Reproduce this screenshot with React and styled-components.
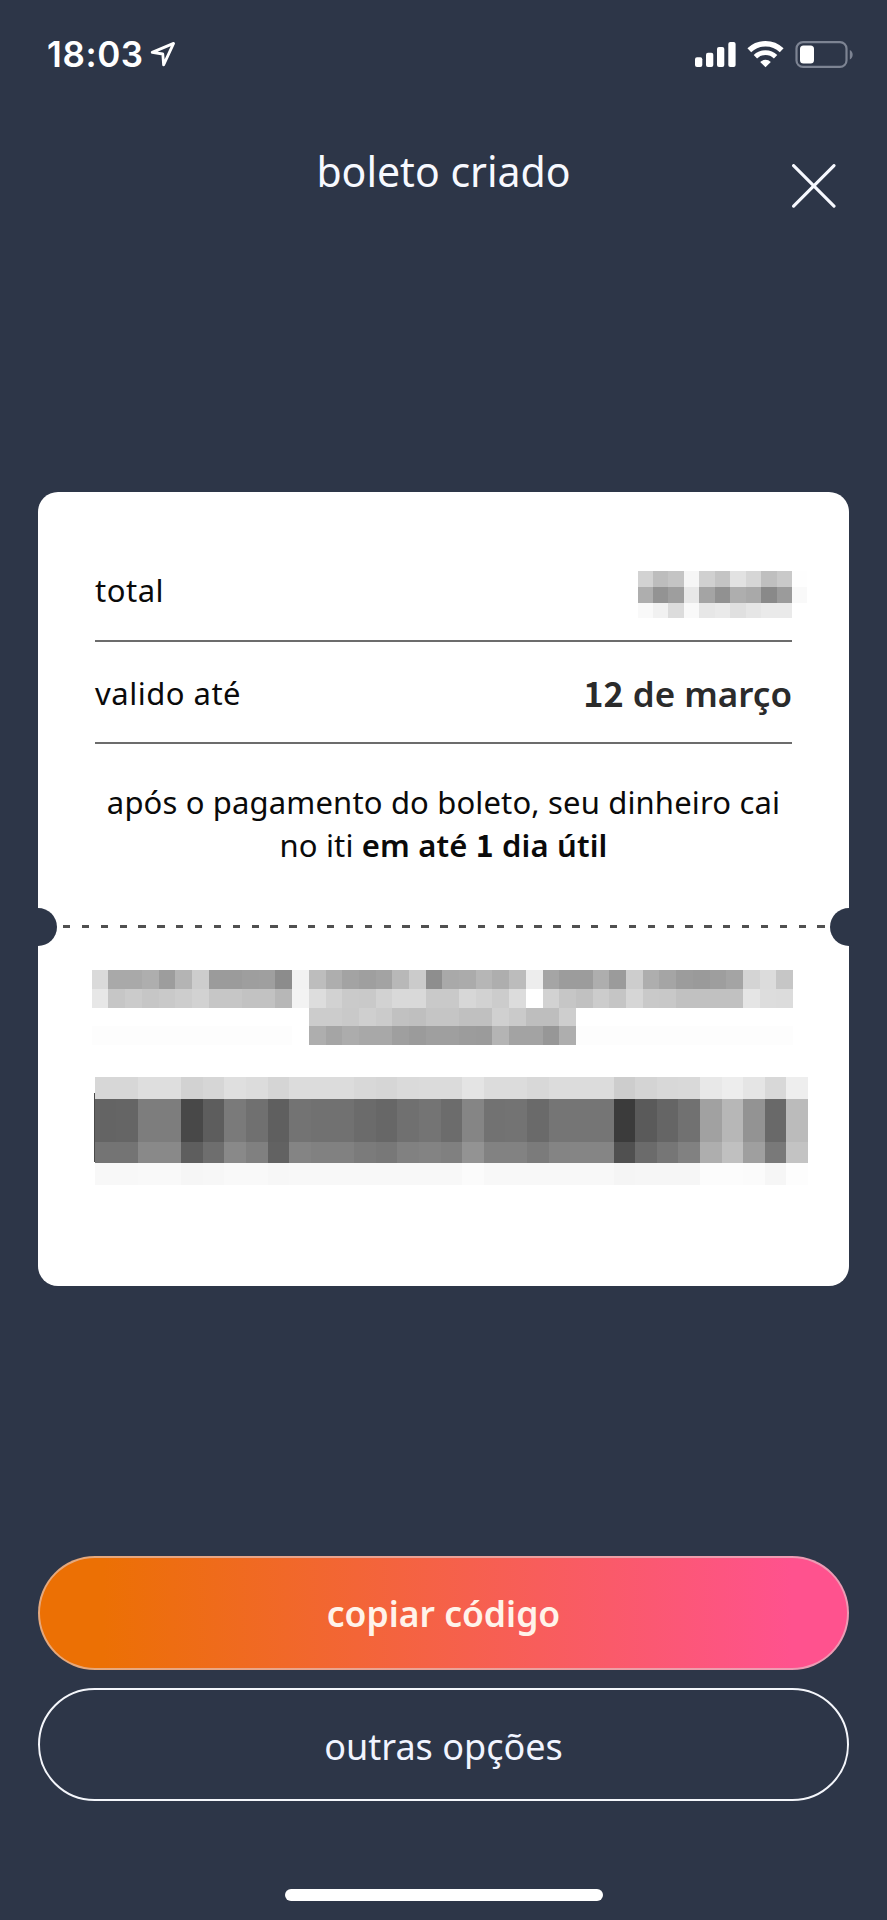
import React from "react";
import styled, { createGlobalStyle } from "styled-components";

const ink = "#2d3648";
const sans = '"Noto Sans", "Open Sans", sans-serif';

const GlobalStyle = createGlobalStyle`
  *, *::before, *::after { box-sizing: border-box; }
  body { margin: 0; background: ${ink}; }
  button { font: inherit; background: none; border: 0; padding: 0; cursor: pointer; }
`;

const Screen = styled.main`
  width: 887px;
  height: 1920px;
  display: flex;
  flex-direction: column;
  background: ${ink};
  font-family: ${sans};
  overflow: hidden;
`;

const StatusBar = styled.div`
  height: 110px;
  padding: 32px 34px 0 47px;
  display: flex;
  justify-content: space-between;
  align-items: flex-start;
  color: #fff;
`;

const Clock = styled.div`
  display: flex;
  align-items: flex-start;
  gap: 6px;
  font: 600 35px/44px Inter, sans-serif;
  letter-spacing: 0.6px;

  svg { margin-top: 9px; }
`;

const Indicators = styled.div`
  display: flex;
  gap: 11px;
  padding-top: 9px;
`;

const Header = styled.header`
  height: 382px;
  padding: 35px 51px 0;
  display: grid;
  grid-template-columns: 44px 1fr 44px;
  align-items: start;
`;

const Title = styled.h1`
  grid-column: 2;
  margin: 2px 0 0;
  color: #f7f9ff;
  font-size: 41px;
  line-height: 48px;
  font-weight: 400;
  text-align: center;
`;

const CloseButton = styled.button`
  height: 44px;
  margin-top: 19px;
`;

const Card = styled.section`
  height: 794px;
  margin: 0 38px;
  padding: 47px 57px 0;
  border-radius: 20px;
  background: #fff;
`;

const Row = styled.div`
  height: 102.6px;
  padding-top: 30px;
  display: flex;
  justify-content: space-between;
  align-items: flex-start;
  border-bottom: 2.5px solid #6c6c6c;
`;

const Label = styled.span`
  margin-top: 1px;
  color: #0a0a0a;
  font-size: 31px;
  line-height: 40px;
  letter-spacing: 0.5px;
`;

const Value = styled.span`
  margin-top: 2px;
  color: #2b2b2b;
  font-size: 35px;
  line-height: 40px;
  font-weight: 600;
`;

const Numeral = styled.span`
  font-family: "Noto Sans CJK JP", sans-serif;
  font-size: 0.98em;
  font-weight: 700;
  line-height: 1;
`;

const Note = styled.p`
  margin: 37px 0 0;
  color: #0a0a0a;
  font-size: 31px;
  line-height: 42.7px;
  text-align: center;
  letter-spacing: 0.15px;
  white-space: nowrap;

  b { font-weight: 600; }
`;

const Tear = styled.div`
  height: 38px;
  margin: 41px -57px 0;
  display: flex;
  justify-content: space-between;
  align-items: center;
`;

const Notch = styled.span`
  width: 18.7px;
  height: 38px;
  background: ${ink};
  border-radius: ${(p) => (p.$side === "left" ? "0 19px 19px 0" : "19px 0 0 19px")};
`;

const Dashes = styled.span`
  width: 762px;
  height: 3px;
  background: repeating-linear-gradient(90deg, #505050 0 7.3px, transparent 7.3px 18.86px);
`;

const Mosaic = styled.div`
  position: relative;
  display: grid;
  width: ${(p) => p.$width}px;
  grid-template-columns: repeat(${(p) => p.$cols}, 1fr);
  grid-template-rows: ${(p) => p.$rows};
  margin: ${(p) => p.$margin};

  &::before {
    content: "";
    display: ${(p) => (p.$edge ? "block" : "none")};
    position: absolute;
    left: -1px;
    top: 16px;
    width: 1px;
    height: 69px;
    background: #4a4a4a;
  }
`;

const Tile = styled.i`
  background: #${(p) => p.$tone + p.$tone + p.$tone};
`;

const Actions = styled.div`
  margin-top: 270px;
  padding: 0 38px;
  display: flex;
  flex-direction: column;
  gap: 18.4px;
`;

const Pill = styled.button`
  && {
    height: 113.5px;
    border-radius: 57px;
    border: 2.5px solid ${(p) => (p.$primary ? "rgba(225,205,205,.6)" : "#f4f6fb")};
    background: ${(p) =>
      p.$primary ? "linear-gradient(90deg, #ec7004 8%, #ff528e 93%) border-box" : "transparent"};
    color: ${(p) => (p.$primary ? "#fff3ea" : "#f1f4ff")};
    font-size: ${(p) => (p.$primary ? 35.5 : 36)}px;
    font-weight: ${(p) => (p.$primary ? 600 : 400)};
    line-height: 50px;
    padding-top: ${(p) => (p.$primary ? 0 : 5)}px;
  }
`;

const HomeIndicator = styled.div`
  width: 318px;
  height: 12px;
  margin: 87.6px auto 0;
  border-radius: 6px;
  background: #fff;
`;

const amount = [
  "d2 bd c4 f6 d0 c4 e2 d6 bf c9 fe",
  "ae 93 9e e8 a4 91 ae a9 89 9b f9",
  "f9 f1 dc f9 e7 ea e0 e6 ea ea ff",
];

const blank = (n, tone) => Array(n).fill(tone).join(" ");

const digits = [
  "da a9 a9 ae 9d b4 cd 9b 9b 9e 9f 8c f2 bd ae a3 9f a3 b8 cb 8e a9 ab b6 ae bc ed a5 9c 9c ae 9b cd ae a5 9c 9a 9e a4 d4 dc c6",
  "e7 c6 cb c6 c9 cd d2 c6 c6 c2 c2 b7 f3 dd d2 ca c9 d2 d9 d9 c9 c9 d7 d2 cc dc ff d2 c6 c1 cc c5 d6 c9 c8 c1 c1 c1 c1 e5 dd dc",
  `${blank(13, "ff")} cc cc c9 cf cb c1 bf c5 c5 c0 c0 d0 ca be be ce ${blank(13, "ff")}`,
  `${blank(12, "fd")} ff ae a5 ac a8 a8 9f 9b 9f 9f 9c 9b b4 a3 a3 97 ae ${blank(13, "fd")}`,
];

const barcode = [
  "d7 d7 de de d2 d6 df dc d5 dc dc dc d8 d6 da db db e4 dc dc d8 dc dc dc cd d4 d8 d9 e8 ed e5 d8 ee",
  "64 65 7d 7d 48 5d 7a 70 5f 73 71 71 6b 67 70 74 6c 85 72 73 6a 75 75 75 3b 5a 65 71 a1 b7 93 69 bb",
  "74 74 89 89 5e 6e 89 80 62 84 81 81 7b 78 81 83 80 93 82 82 7b 84 85 85 50 6b 76 81 ae c0 9f 79 c3",
  "f8 f8 f9 f9 f6 f7 f9 f9 f7 f8 f8 f8 f8 f8 f8 f8 f8 fb f8 f8 f8 f8 f8 f8 f5 f6 f6 f6 fc fc fb f6 fd",
];

const Redacted = ({ data, width, rows, margin, edge }) => {
  const tones = data.map((line) => line.split(" "));
  return (
    <Mosaic $cols={tones[0].length} $width={width} $rows={rows} $margin={margin} $edge={edge} aria-hidden="true">
      {tones.flat().map((tone, i) => (
        <Tile key={i} $tone={tone} />
      ))}
    </Mosaic>
  );
};

const LocationArrow = () => (
  <svg width="26" height="27" viewBox="0 0 26 27" fill="none" stroke="#fff" strokeWidth="2.8" strokeLinejoin="round">
    <path d="M23.6 2.4 2.2 11.4l10.6 1.6.8 10.8z" />
  </svg>
);

const Signal = () => (
  <svg width="41" height="27" viewBox="0 0 41 27" fill="#fff">
    <rect x="0" y="16.3" width="7.3" height="9.7" rx="2" />
    <rect x="11" y="11.7" width="7.3" height="14.3" rx="2" />
    <rect x="22" y="6" width="7.3" height="20" rx="2" />
    <rect x="33.3" y="1" width="7.3" height="25" rx="2" />
  </svg>
);

const Wifi = () => (
  <svg width="37" height="27" viewBox="0 0 37 27" fill="none" stroke="#fff">
    <path d="M2.3 9.3a23.2 23.2 0 0 1 32.4 0" strokeWidth="5.4" />
    <path d="M8.4 15.7a14.4 14.4 0 0 1 20.2 0" strokeWidth="4.8" />
    <path d="M18.5 26.2 13.2 20.9a7.6 7.6 0 0 1 10.6 0z" fill="#fff" stroke="none" />
  </svg>
);

const Battery = () => (
  <svg width="58" height="27" viewBox="0 0 58 27" fill="none">
    <rect x="1.5" y="1.1" width="50" height="24.8" rx="6.5" stroke="#7d8493" strokeWidth="2.2" />
    <rect x="5" y="4.6" width="14" height="17.8" rx="3.5" fill="#fff" />
    <path d="M54.8 9v9.6c3.8-1.6 3.8-8 0-9.6z" fill="#7d8493" />
  </svg>
);

const Close = () => (
  <svg width="44" height="44" viewBox="0 0 44 44" stroke="#f7f9ff" strokeWidth="3.1" strokeLinecap="round">
    <path d="M1.6 1.6 42 42.2M42 1.6 1.6 42.2" />
  </svg>
);

export default function App() {
  return (
    <>
      <GlobalStyle />
      <Screen>
        <StatusBar>
          <Clock>
            18:03
            <LocationArrow />
          </Clock>
          <Indicators>
            <Signal />
            <Wifi />
            <Battery />
          </Indicators>
        </StatusBar>
        <Header>
          <Title>boleto criado</Title>
          <CloseButton aria-label="fechar">
            <Close />
          </CloseButton>
        </Header>
        <Card>
          <Row>
            <Label>total</Label>
            <Redacted data={amount} width={170} rows="16px 16px 15px" margin="2px -15.5px 0 0" />
          </Row>
          <Row>
            <Label>valido até</Label>
            <Value>
              <Numeral>12</Numeral> de março
            </Value>
          </Row>
          <Note>
            após o pagamento do boleto, seu dinheiro cai
            <br />
            no iti{" "}
            <b>
              em até <Numeral>1</Numeral> dia útil
            </b>
          </Note>
          <Tear>
            <Notch $side="left" />
            <Dashes />
            <Notch $side="right" />
          </Tear>
          <Redacted data={digits} width={701.4} rows="19px 19px 18px 19px" margin="24px 0 0 -3.3px" />
          <Redacted data={barcode} width={713.5} rows="22px 43px 21px 22px" margin="32px 0 0 -0.4px" edge />
        </Card>
        <Actions>
          <Pill $primary>copiar código</Pill>
          <Pill>outras opções</Pill>
        </Actions>
        <HomeIndicator />
      </Screen>
    </>
  );
}
